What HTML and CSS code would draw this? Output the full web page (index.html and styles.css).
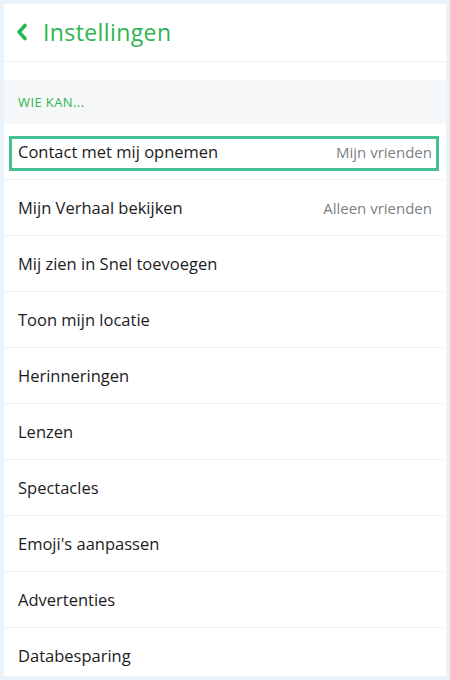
FILE: index.html
```html
<!doctype html>
<html lang="nl">
<head>
    <meta charset="utf-8">
    <title>Instellingen</title>
    <link rel="stylesheet" href="styles.css">
</head>
<body>
    <div class="panel">
        <div class="header">
            <svg class="back" width="12" height="18" viewBox="0 0 12 18">
                <path d="M9 2.5 L3 9 L9 15.5" fill="none" stroke="#2fb54f" stroke-width="3.6" stroke-linecap="round" stroke-linejoin="round"/>
            </svg>
            <h1>Instellingen</h1>
        </div>
        <div class="spacer"></div>
        <div class="section">WIE KAN...</div>
        <ul class="list">
            <li class="row active"><span class="label">Contact met mij opnemen</span><span class="value">Mijn vrienden</span></li>
            <li class="row"><span class="label">Mijn Verhaal bekijken</span><span class="value">Alleen vrienden</span></li>
            <li class="row"><span class="label">Mij zien in Snel toevoegen</span></li>
            <li class="row"><span class="label">Toon mijn locatie</span></li>
            <li class="row"><span class="label">Herinneringen</span></li>
            <li class="row"><span class="label">Lenzen</span></li>
            <li class="row"><span class="label">Spectacles</span></li>
            <li class="row"><span class="label">Emoji's aanpassen</span></li>
            <li class="row"><span class="label">Advertenties</span></li>
            <li class="row"><span class="label">Databesparing</span></li>
        </ul>
    </div>
</body>
</html>
```

FILE: styles.css
```css
html, body {
    margin: 0;
    padding: 0;
    height: 100%;
    overflow: hidden;
}
body {
    background: #eaf3f9;
    font-family: "Open Sans", "Noto Sans", sans-serif;
    padding: 4px;
    box-sizing: border-box;
}
.panel {
    background: #fff;
    height: 672px;
    overflow: hidden;
}
.header {
    height: 57px;
    display: flex;
    align-items: center;
    padding-left: 12px;
    border-bottom: 1px solid #eef0f2;
}
.back {
    margin-right: 15px;
    margin-top: -2px;
}
h1 {
    margin: 0 0 2px;
    font-size: 23px;
    font-weight: 400;
    color: #2fb54f;
    letter-spacing: 0.4px;
}
.spacer {
    height: 18px;
}
.section {
    background: #f5f7f9;
    height: 44px;
    display: flex;
    align-items: center;
    padding-left: 14px;
    font-size: 13px;
    letter-spacing: 0.4px;
    color: #2fb54f;
}
.list {
    list-style: none;
    margin: 0;
    padding: 0;
}
.row {
    height: 55px;
    border-bottom: 1px solid #f0f2f4;
    display: flex;
    align-items: center;
    justify-content: space-between;
    padding: 0 14px;
    font-size: 16.5px;
    color: #1c1c1e;
}
.row.active {
    position: relative;
}
.row.active::before {
    content: "";
    position: absolute;
    left: 5px;
    right: 7px;
    top: 12px;
    bottom: 8px;
    border: 3px solid #46bf93;
}
.value {
    font-size: 15px;
    color: #7c7f86;
}
```
